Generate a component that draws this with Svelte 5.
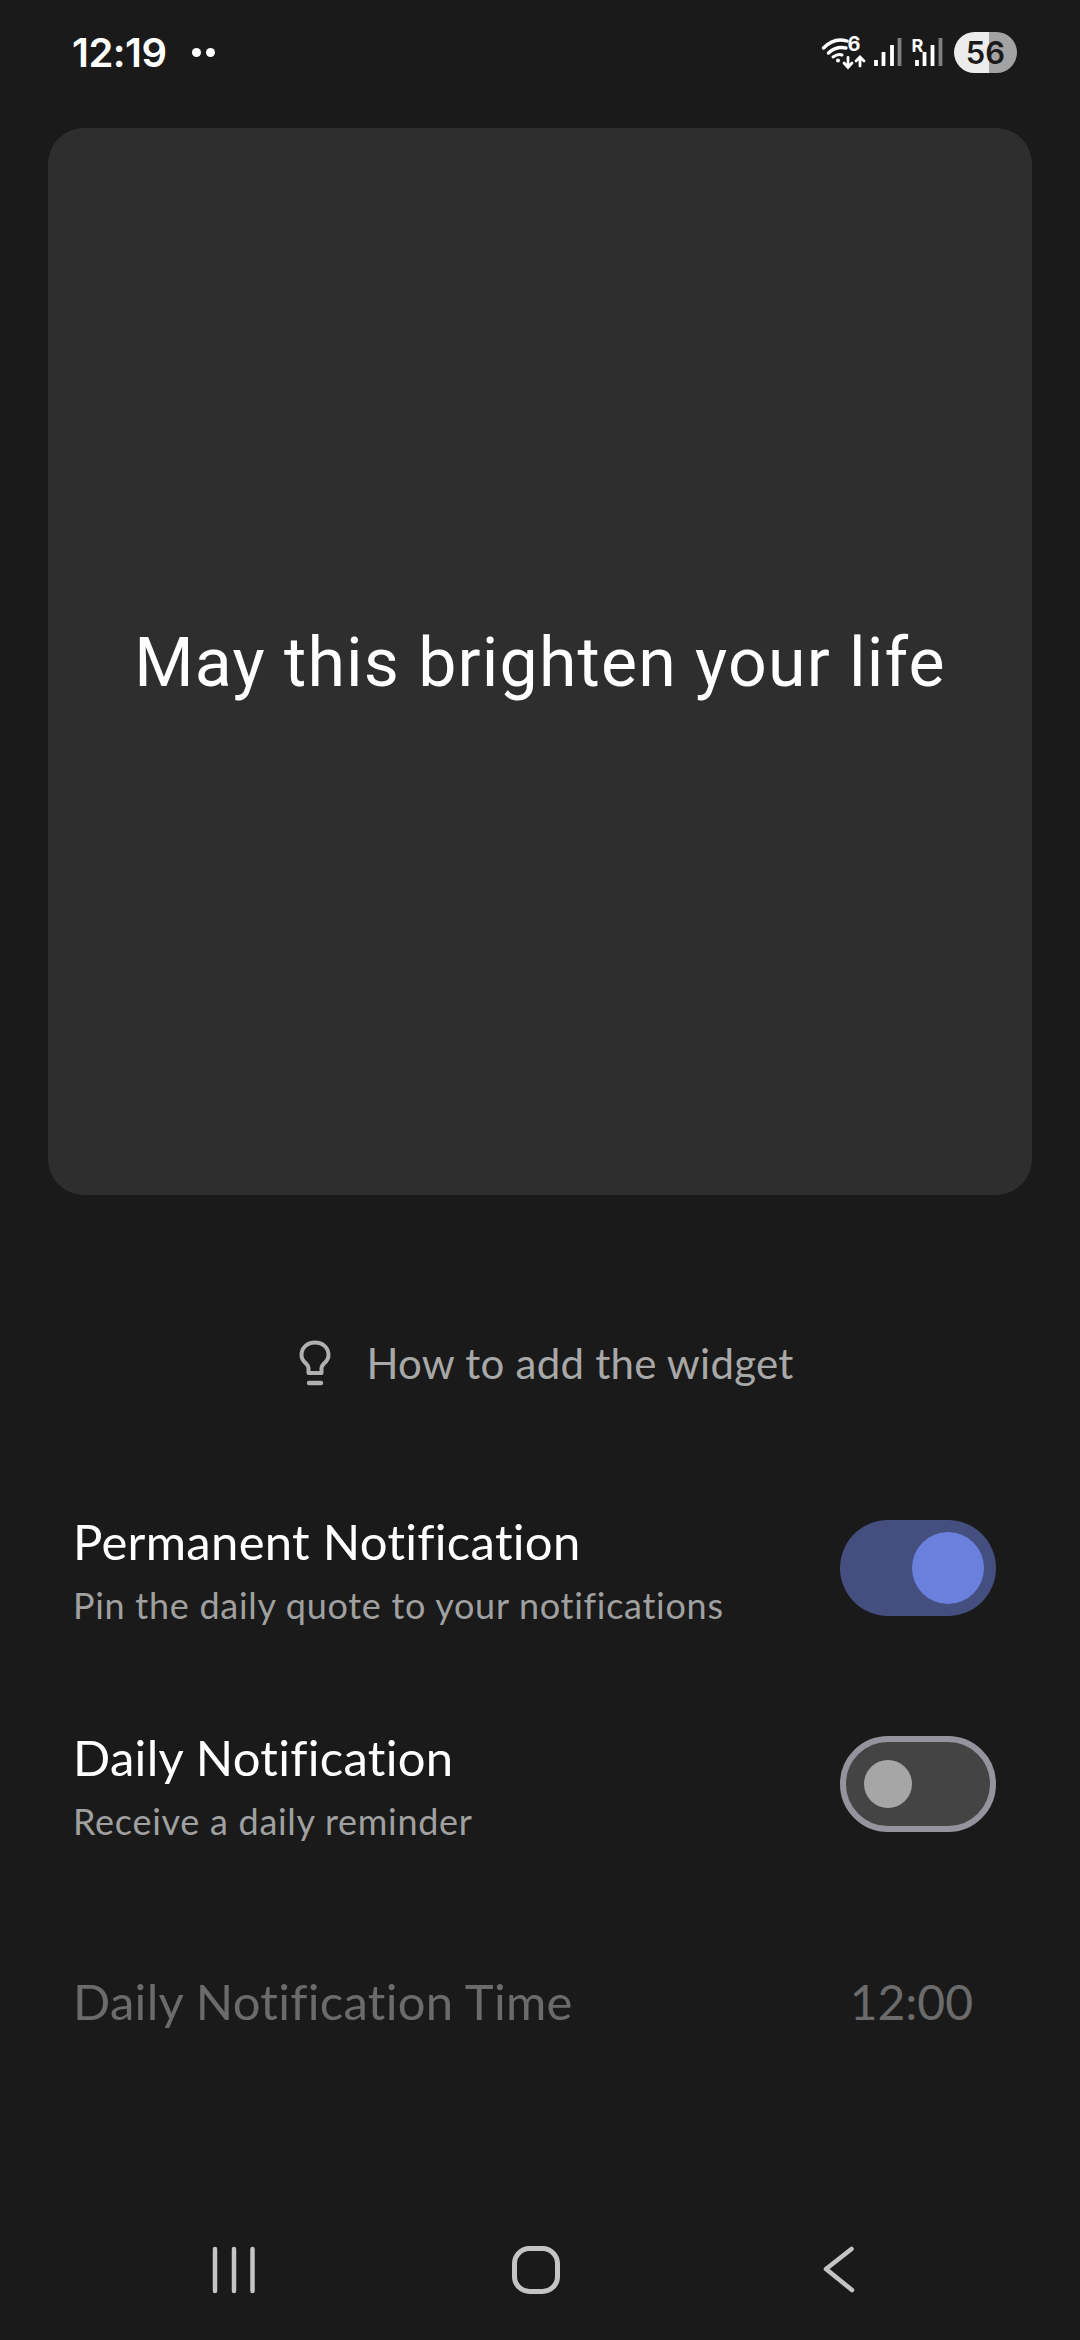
<script>
  let permanent = $state(true);
  let daily = $state(false);
</script>

<main class="page">
  <header class="status">
    <div class="clock">
      <span class="time">12:19</span>
      <span class="dot"></span>
      <span class="dot"></span>
    </div>
    <div class="indicators">
      <svg class="sys" width="132" height="48" viewBox="0 0 132 48" fill="none" stroke="#fff" stroke-linecap="round">
        <!-- wifi, origin is x 820 y 30 on the page -->
        <path d="M3.5 18 Q14 7 27 11" stroke-width="3.4" />
        <path d="M8.5 23 Q16 16 26 18" stroke-width="3.4" />
        <path d="M13 27 Q18 23.5 22 25" stroke-width="3" />
        <circle cx="18" cy="30.5" r="2" fill="#fff" stroke="none" />
        <text x="27.5" y="20.5" class="six">6</text>
        <path d="M28 27.5V37M24 33L28 37.5L32 33" stroke-width="2.8" />
        <path d="M40 36V27.5M36 31L40 27L44 31" stroke-width="2.8" />
        <!-- signal bars -->
        <g stroke-linecap="butt" stroke-width="3.8">
          <path d="M56 36V30M63.5 36V22M72 36V15" />
          <path d="M79.5 36V8" stroke="#808080" />
          <path d="M97 36V30M104.5 36V22M112.5 36V15" />
          <path d="M120.5 36V8" stroke="#808080" />
        </g>
        <text x="91.5" y="22" class="tiny">R</text>
      </svg>
      <div class="battery">
        <span class="level">56</span>
      </div>
    </div>
  </header>

  <section class="card">
    <p class="quote">May this brighten your life</p>
  </section>

  <button class="hint">
    <svg width="36" height="46" viewBox="0 0 36 46" fill="none" stroke="#b0b0b0" stroke-width="4" stroke-linecap="round" stroke-linejoin="round">
      <path d="M11.5 33V28C11.5 26 10.5 25 9 23.5C6 21 4.5 18 4.5 15C4.5 8 10 2.5 18 2.5C26 2.5 31.5 8 31.5 15C31.5 18 30 21 27 23.5C25.5 25 24.5 26 24.5 28V33Z" />
      <path d="M12 43H24" stroke-width="4.4" />
    </svg>
    <span>How to add the widget</span>
  </button>

  <div class="settings">
    <div class="row">
      <div class="copy">
        <div class="title">Permanent Notification</div>
        <div class="sub">Pin the daily quote to your notifications</div>
      </div>
      <button class="switch" class:on={permanent} aria-label="Permanent Notification" onclick={() => permanent = !permanent}>
        <span class="knob"></span>
      </button>
    </div>
    <div class="row">
      <div class="copy">
        <div class="title">Daily Notification</div>
        <div class="sub">Receive a daily reminder</div>
      </div>
      <button class="switch" class:on={daily} aria-label="Daily Notification" onclick={() => daily = !daily}>
        <span class="knob"></span>
      </button>
    </div>
    <div class="row time-row">
      <div class="title muted">Daily Notification Time</div>
      <div class="value muted">12:00</div>
    </div>
  </div>

  <nav class="nav">
    <svg width="52" height="70" viewBox="0 0 52 70" stroke="#c4c4c4" stroke-width="4.5" stroke-linecap="round">
      <path d="M7 14V56M26 14V56M44.5 14V56" />
    </svg>
    <svg width="52" height="70" viewBox="0 0 52 70" fill="none" stroke="#c4c4c4" stroke-width="5">
      <rect x="4.5" y="13.5" width="43" height="43" rx="15" />
    </svg>
    <svg width="45" height="70" viewBox="0 0 45 70" fill="none" stroke="#c4c4c4" stroke-width="4.5" stroke-linecap="round" stroke-linejoin="round">
      <path d="M39.5 14L14 34L40 55" />
    </svg>
  </nav>
</main>

<style>
  :global(body) {
    margin: 0;
    background: #1a1a1a;
  }
  .page {
    width: 1080px;
    height: 2340px;
    display: flex;
    flex-direction: column;
    background: #1a1a1a;
    overflow: hidden;
    font-family: Lato, sans-serif;
    color: #fff;
  }
  .status {
    height: 128px;
    box-sizing: border-box;
    padding: 30px 63px 0 72px;
    display: flex;
    justify-content: space-between;
    align-items: flex-start;
  }
  .clock {
    display: flex;
    align-items: center;
    height: 44px;
    gap: 5px;
  }
  .time {
    font-family: Inter, sans-serif;
    font-size: 40px;
    font-weight: 600;
    margin-right: 20px;
    letter-spacing: -0.5px;
  }
  .dot {
    width: 9px;
    height: 9px;
    border-radius: 50%;
    background: #fff;
  }
  .indicators {
    display: flex;
    align-items: flex-start;
  }
  .sys {
    display: block;
    margin-right: 2px;
  }
  .tiny {
    font-family: Inter, sans-serif;
    font-size: 18px;
    font-weight: 700;
    fill: #fff;
    stroke: none;
  }
  .six {
    font-family: Inter, sans-serif;
    font-size: 20px;
    font-weight: 700;
    fill: #fff;
    stroke: none;
  }
  .battery {
    width: 63px;
    height: 41px;
    margin-top: 2px;
    border-radius: 21px;
    background: linear-gradient(to right, #ececec 0 35px, #a3a3a3 35px);
    display: flex;
    align-items: center;
    justify-content: center;
  }
  .level {
    font-family: Inter, sans-serif;
    font-size: 31px;
    font-weight: 600;
    color: #1a1a1a;
  }
  .card {
    margin: 0 48px;
    height: 1067px;
    box-sizing: border-box;
    padding-top: 2px;
    border-radius: 36px;
    background: #2e2e2e;
    display: flex;
    align-items: center;
    justify-content: center;
  }
  .quote {
    margin: 0;
    font-family: Roboto, sans-serif;
    font-size: 68px;
    letter-spacing: 1.2px;
    color: #fff;
  }
  .hint {
    margin-top: 143px;
    margin-left: 11px;
    align-self: center;
    display: flex;
    align-items: center;
    gap: 33px;
    padding: 0;
    border: 0;
    background: none;
    font-family: Lato, sans-serif;
    font-size: 42px;
    letter-spacing: 0.26px;
    color: #a8a8a8;
  }
  .settings {
    margin-top: 132px;
    display: flex;
    flex-direction: column;
    gap: 120px;
    padding: 0 84px 0 73px;
  }
  .row {
    display: flex;
    align-items: center;
    justify-content: space-between;
    height: 96px;
  }
  .copy {
    padding-top: 4px;
  }
  .title {
    font-size: 49px;
    line-height: 56px;
    color: #fff;
    letter-spacing: 0.3px;
  }
  .sub {
    font-size: 36px;
    line-height: 46px;
    margin-top: 13px;
    color: #a0a0a0;
    letter-spacing: 0.72px;
  }
  .title.muted,
  .value.muted {
    color: #6b6b6b;
  }
  .value {
    font-size: 48px;
    margin-right: 23px;
  }
  .time-row {
    margin-top: 1px;
  }
  .switch {
    width: 156px;
    height: 96px;
    box-sizing: border-box;
    padding: 0 18px;
    border-radius: 48px;
    border: 6px solid #94949e;
    background: #444;
    display: flex;
    align-items: center;
    justify-content: flex-start;
  }
  .knob {
    width: 48px;
    height: 48px;
    border-radius: 50%;
    background: #a6a6a6;
  }
  .switch.on {
    border: 0;
    padding: 0 12px;
    background: #444f80;
    justify-content: flex-end;
  }
  .switch.on .knob {
    width: 72px;
    height: 72px;
    background: #6b80dc;
  }
  .nav {
    margin-top: auto;
    margin-bottom: 35px;
    height: 70px;
    padding: 0 223px 0 208px;
    display: flex;
    align-items: center;
    justify-content: space-between;
  }
</style>
